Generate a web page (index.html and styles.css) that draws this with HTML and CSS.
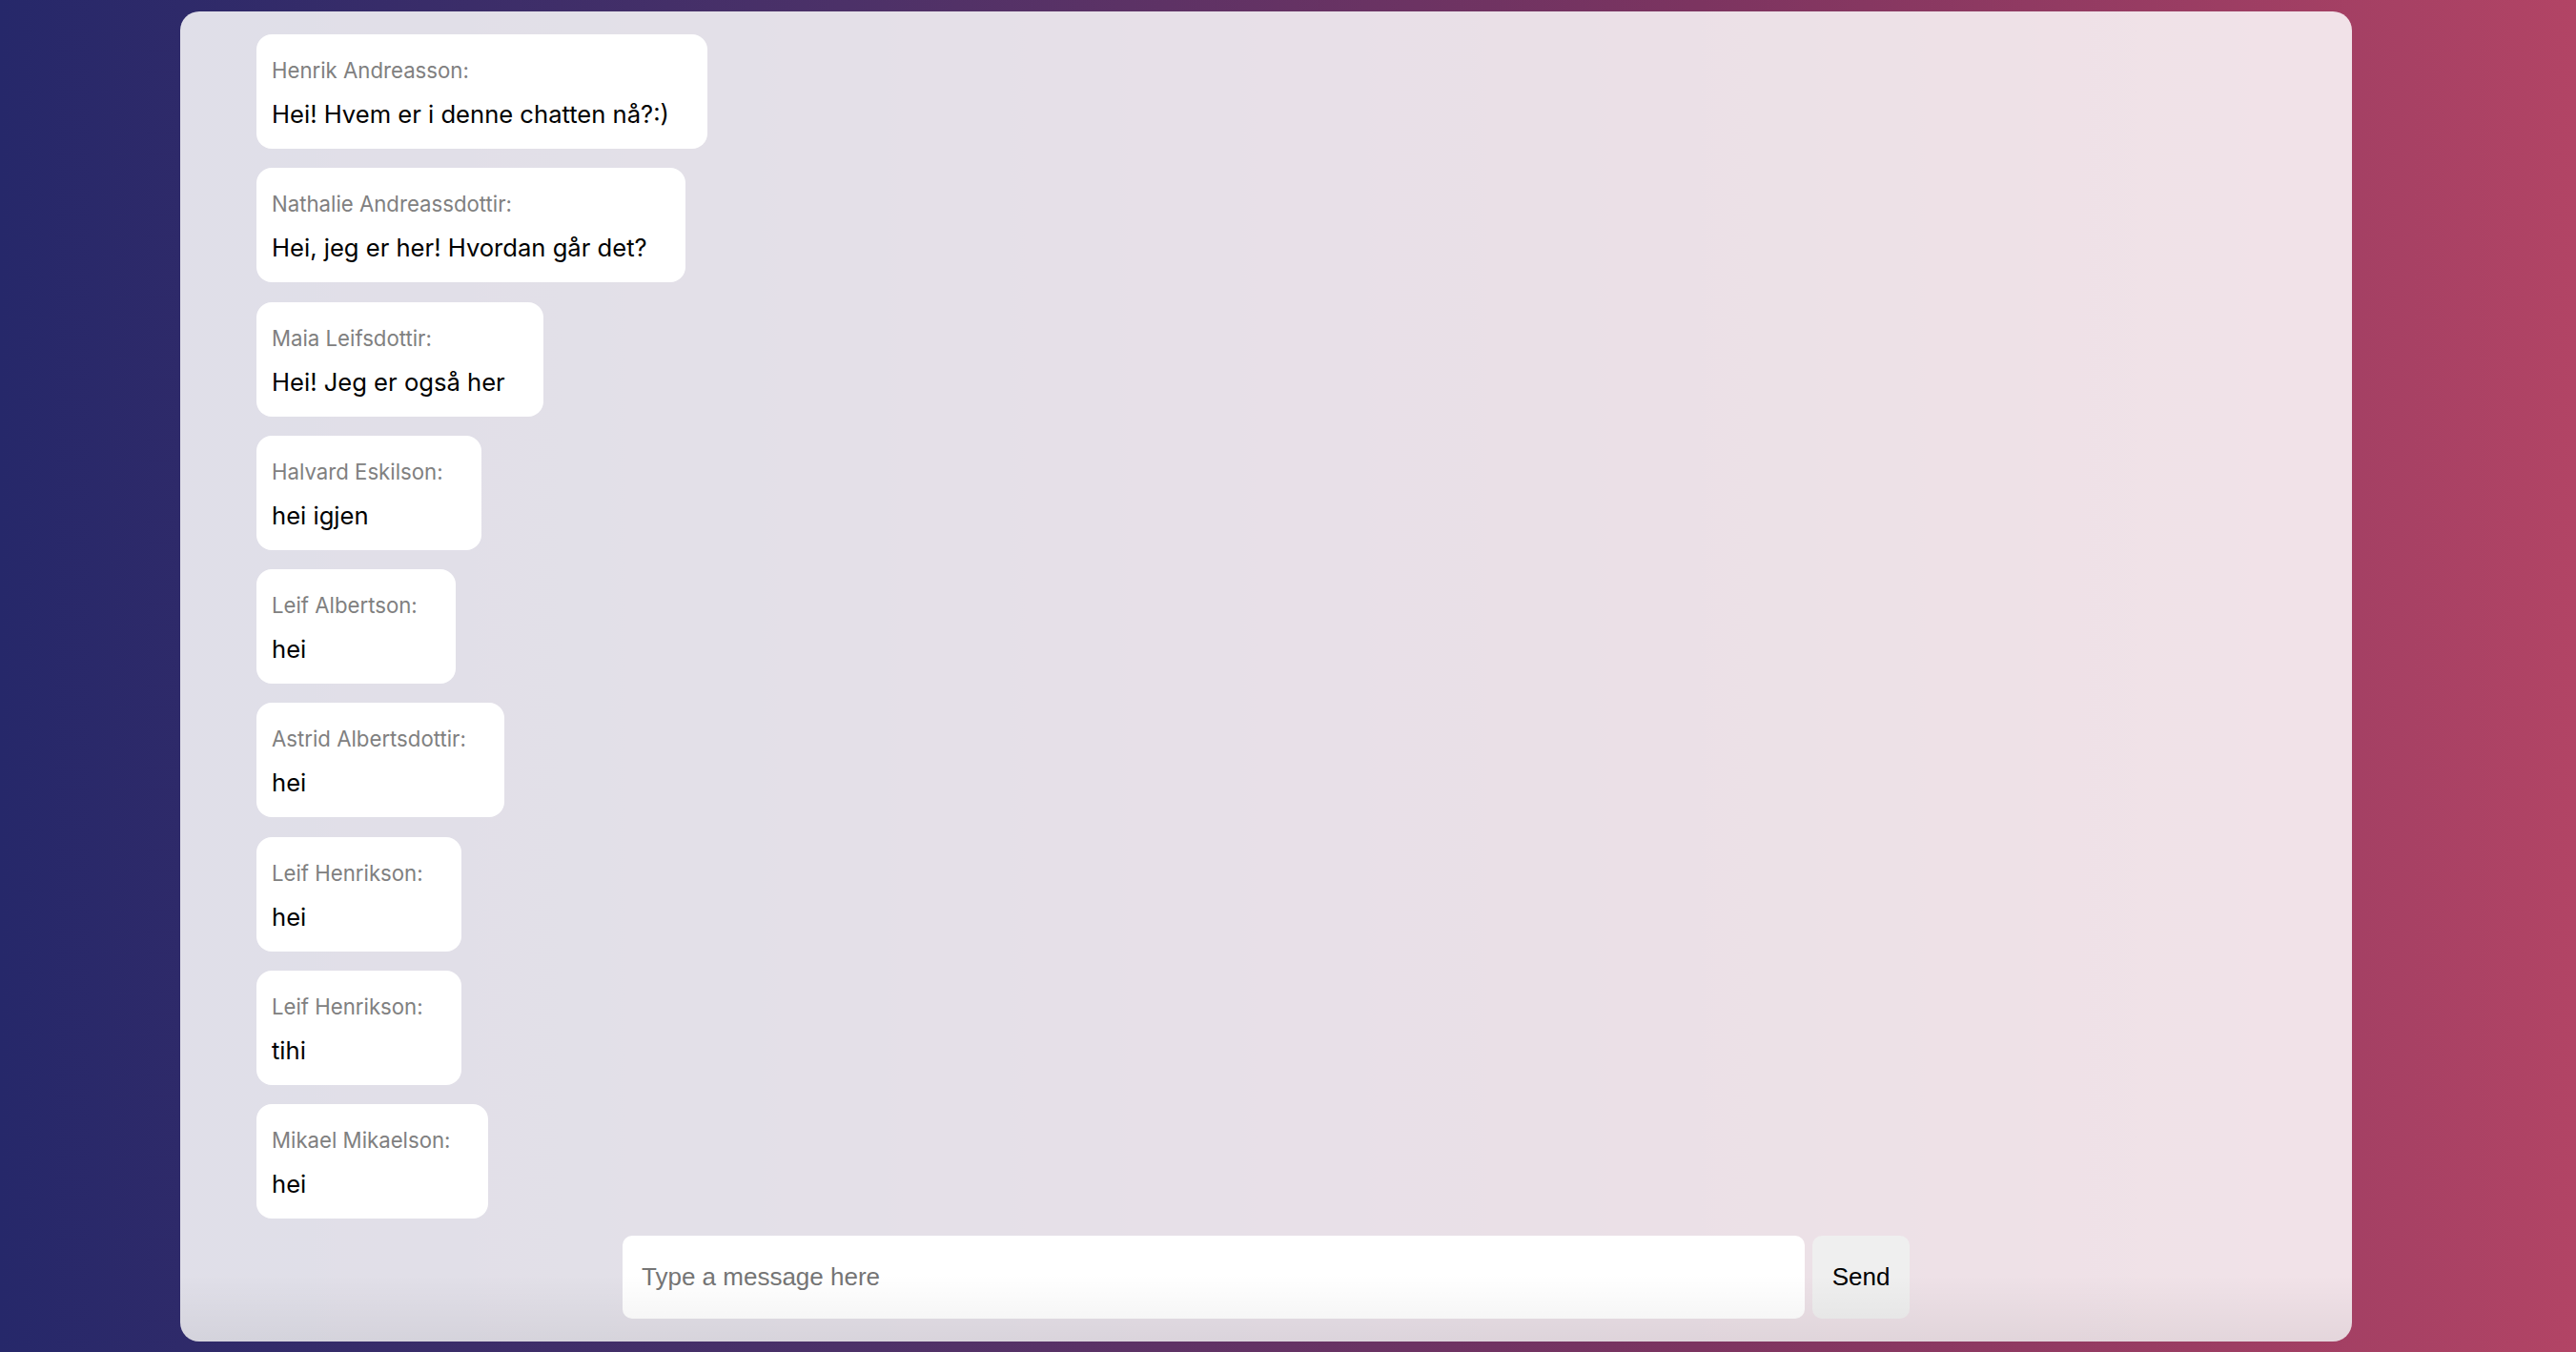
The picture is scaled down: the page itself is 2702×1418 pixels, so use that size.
FILE: index.html
```html
<!DOCTYPE html>
<html lang="no">
<head>
<meta charset="utf-8">
<title>Chat</title>
<link rel="stylesheet" href="styles.css">
</head>
<body>
<main class="chat">
  <section class="messages">
    <div class="bubble"><div class="name">Henrik Andreasson:</div><div class="text">Hei! Hvem er i denne chatten nå?:)</div></div>
    <div class="bubble"><div class="name">Nathalie Andreassdottir:</div><div class="text">Hei, jeg er her! Hvordan går det?</div></div>
    <div class="bubble"><div class="name">Maia Leifsdottir:</div><div class="text">Hei! Jeg er også her</div></div>
    <div class="bubble"><div class="name">Halvard Eskilson:</div><div class="text">hei igjen</div></div>
    <div class="bubble"><div class="name">Leif Albertson:</div><div class="text">hei</div></div>
    <div class="bubble"><div class="name">Astrid Albertsdottir:</div><div class="text">hei</div></div>
    <div class="bubble"><div class="name">Leif Henrikson:</div><div class="text">hei</div></div>
    <div class="bubble"><div class="name">Leif Henrikson:</div><div class="text">tihi</div></div>
    <div class="bubble"><div class="name">Mikael Mikaelson:</div><div class="text">hei</div></div>
  </section>
  <form class="composer">
    <input class="input" type="text" placeholder="Type a message here">
    <button class="send" type="button">Send</button>
  </form>
  <div class="shade"></div>
</main>
</body>
</html>
```

FILE: styles.css
```css
html, body {
  margin: 0;
  padding: 0;
}

body {
  height: 1418px;
  overflow: hidden;
  background: linear-gradient(90deg, #26286a 0%, #4c3168 33%, #7c3460 66%, #b24465 100%);
  font-family: Inter, "Noto Sans", sans-serif;
}

.chat {
  position: relative;
  box-sizing: border-box;
  width: 2278px;
  height: 1395px;
  margin: 12px 0 0 189px;
  border-radius: 20px;
  background: rgba(255, 255, 255, 0.85);
  display: flex;
  flex-direction: column;
  overflow: hidden;
}

.messages {
  flex: 1;
  display: flex;
  flex-direction: column;
  align-items: flex-start;
  gap: 20.25px;
  padding: 24px 0 0 80px;
  overflow: hidden;
}

.bubble {
  background: #ffffff;
  border-radius: 16px;
  padding: 25px 40px 22px 16px;
}

.name {
  font-size: 22.2px;
  line-height: 25px;
  color: #808080;
  margin-bottom: 19px;
}

.text {
  font-size: 25.6px;
  line-height: 29px;
  color: #000000;
}

.composer {
  display: flex;
  justify-content: center;
  gap: 8px;
  padding: 0 0 24px;
  margin: 0;
}

.input {
  box-sizing: border-box;
  width: 1240px;
  height: 87px;
  border: none;
  outline: none;
  border-radius: 10px;
  padding: 0 20px;
  background: #ffffff;
  font-family: "Liberation Sans", Arial, sans-serif;
  font-size: 26px;
  color: #000;
}

.input::placeholder {
  color: #757575;
}

.send {
  box-sizing: border-box;
  width: 102px;
  height: 87px;
  border: none;
  border-radius: 10px;
  padding: 0;
  background: #efefef;
  font-family: "Liberation Sans", Arial, sans-serif;
  font-size: 26px;
  color: #000;
}

.shade {
  position: absolute;
  left: 0;
  right: 0;
  bottom: 0;
  height: 70px;
  pointer-events: none;
  background: linear-gradient(180deg, rgba(0, 0, 0, 0) 0%, rgba(0, 0, 0, 0.055) 100%);
}
```
